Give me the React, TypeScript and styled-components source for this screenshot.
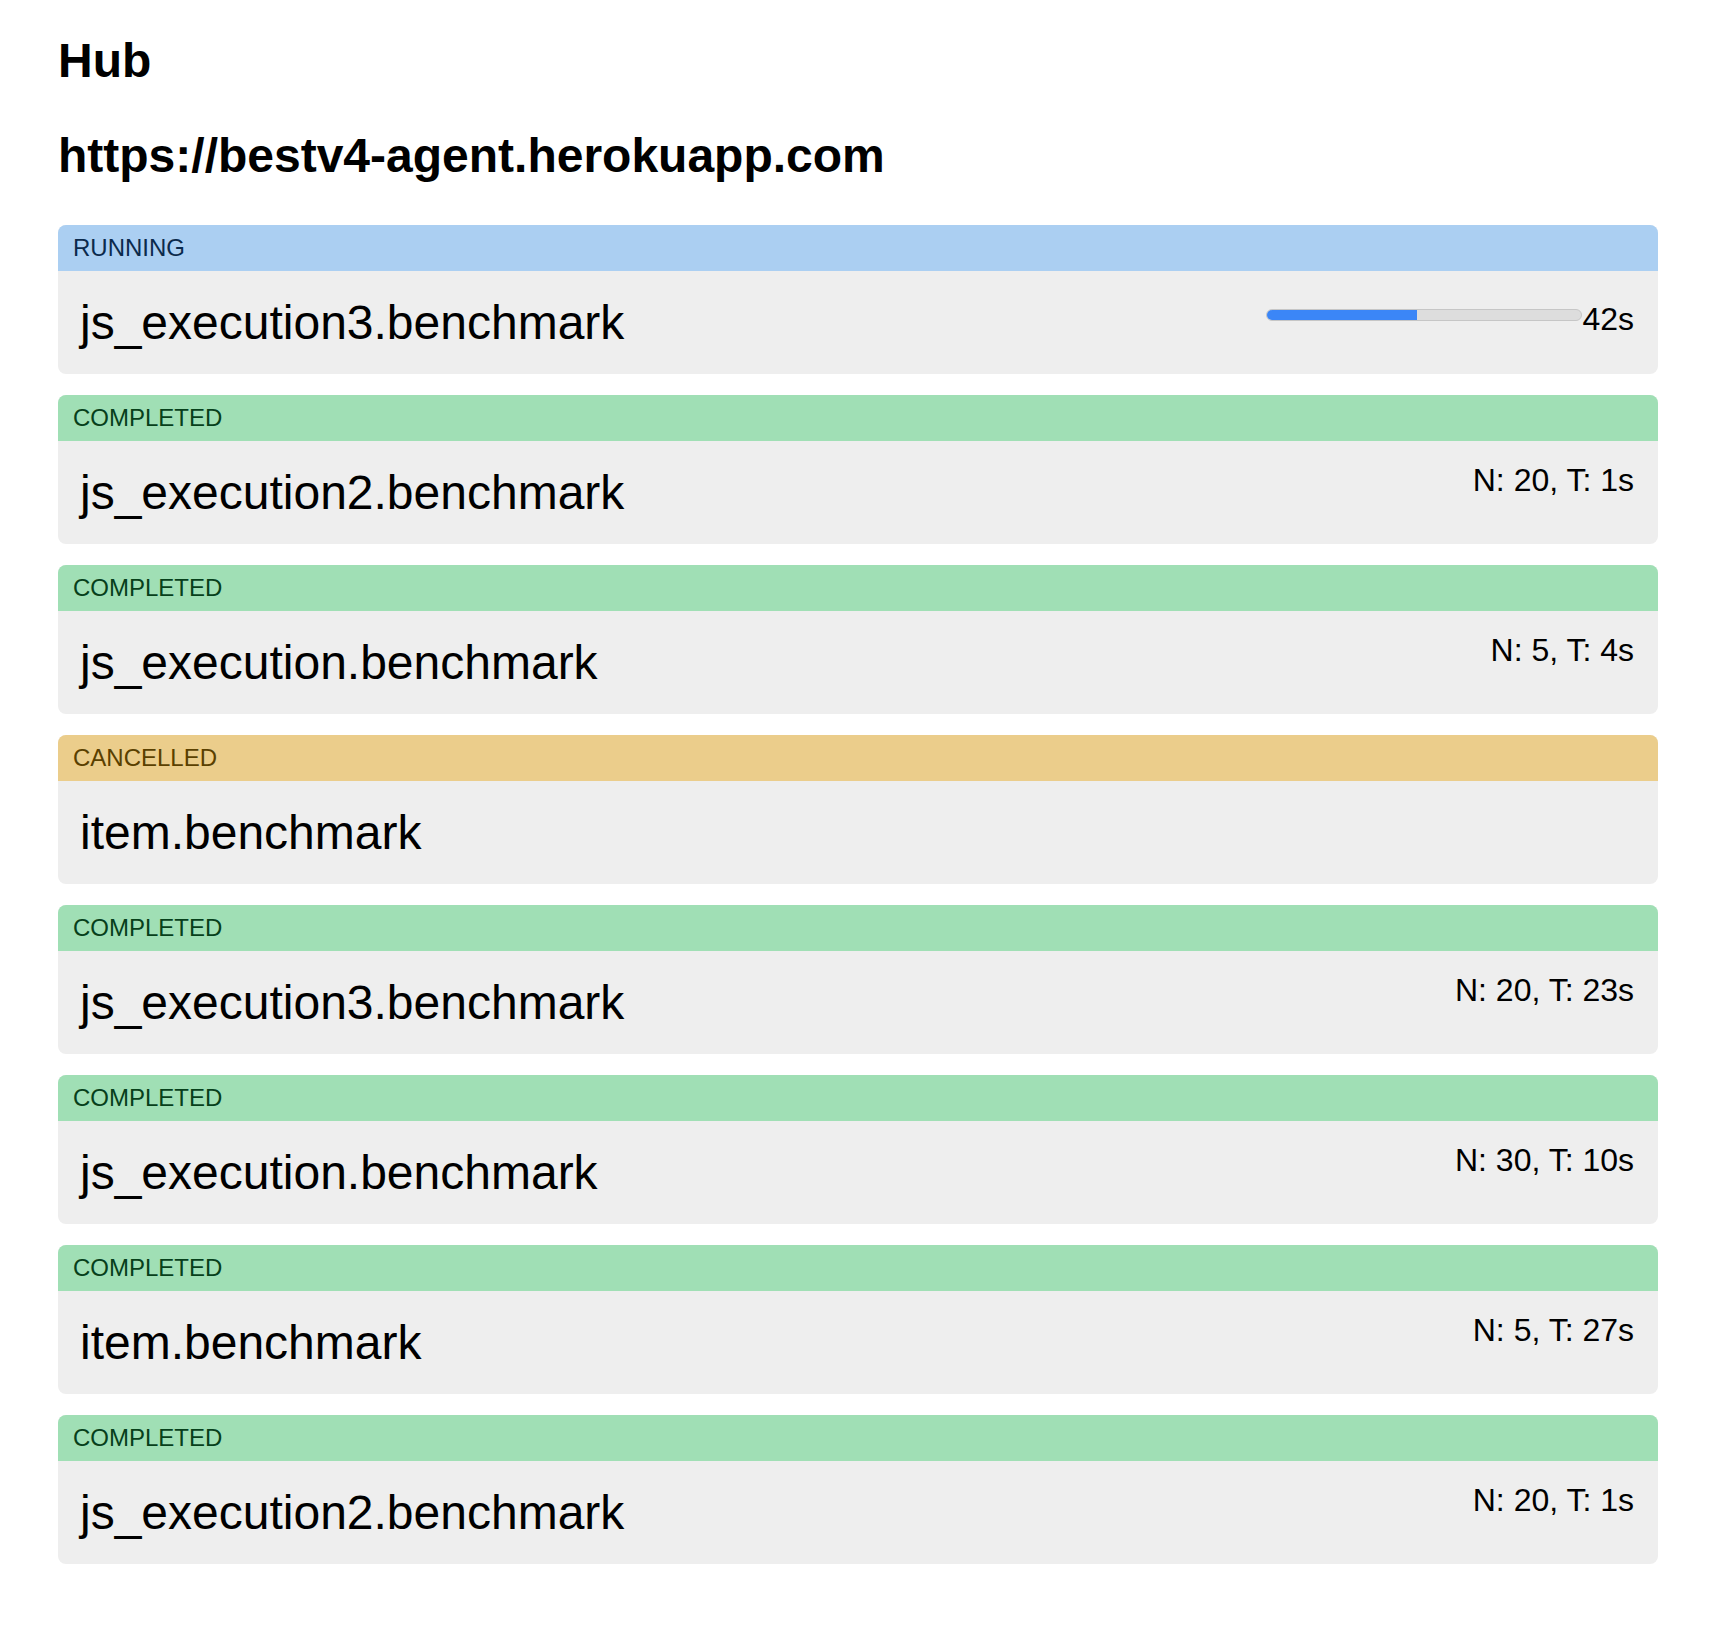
import React from "react";
import styled, { createGlobalStyle } from "styled-components";

const Global = createGlobalStyle`
  html, body { margin: 0; padding: 0; background: #ffffff; }
  body { font-family: "Liberation Sans", Arial, Helvetica, sans-serif; color: #000; }
`;

const Page = styled.div`
  padding: 33px 0 40px 58px;
  width: 1600px;
`;

const Title = styled.h2`
  font-size: 48px;
  font-weight: 700;
  line-height: 55px;
  margin: 0 0 40px 0;
`;

const Url = styled(Title)`
  margin-bottom: 0;
`;

const List = styled.div`
  display: flex;
  flex-direction: column;
  gap: 21px;
  margin-top: 42px;
`;

type Status = "RUNNING" | "COMPLETED" | "CANCELLED";

const palette: Record<Status, { bg: string; fg: string }> = {
  RUNNING: { bg: "#abcff2", fg: "#0b2a4c" },
  COMPLETED: { bg: "#a0dfb5", fg: "#07401b" },
  CANCELLED: { bg: "#ebcd8b", fg: "#5a4000" },
};

const Card = styled.div`
  border-radius: 8px;
  overflow: hidden;
  background: #eeeeee;
`;

const Label = styled.div<{ $status: Status }>`
  height: 46px;
  box-sizing: border-box;
  padding: 9px 15px 0 15px;
  font-size: 24px;
  line-height: 28px;
  background: ${(p) => palette[p.$status].bg};
  color: ${(p) => palette[p.$status].fg};
`;

const Body = styled.div`
  display: flex;
  justify-content: space-between;
  align-items: flex-start;
  padding: 21px 24px 21px 22px;
  height: 103px;
  box-sizing: border-box;
`;

const Name = styled.div`
  font-size: 48px;
  line-height: 61px;
  white-space: nowrap;
`;

const Meta = styled.div<{ $running?: boolean }>`
  display: flex;
  align-items: flex-start;
  font-size: 32px;
  line-height: 37px;
  margin-top: ${(p) => (p.$running ? "9px" : "0")};
  white-space: nowrap;
`;

const Track = styled.div`
  width: 316px;
  height: 12px;
  box-sizing: border-box;
  margin-top: 8px;
  border-radius: 6px;
  background: #dddddd;
  border: 1px solid #c6c6c6;
  overflow: hidden;
  display: flex;
`;

const Fill = styled.div`
  height: 100%;
  background: #3b86f7;
`;

type Job = { status: Status; name: string; meta?: string; progress?: number; elapsed?: string };

const jobs: Job[] = [
  { status: "RUNNING", name: "js_execution3.benchmark", progress: 0.476, elapsed: "42s" },
  { status: "COMPLETED", name: "js_execution2.benchmark", meta: "N: 20, T: 1s" },
  { status: "COMPLETED", name: "js_execution.benchmark", meta: "N: 5, T: 4s" },
  { status: "CANCELLED", name: "item.benchmark" },
  { status: "COMPLETED", name: "js_execution3.benchmark", meta: "N: 20, T: 23s" },
  { status: "COMPLETED", name: "js_execution.benchmark", meta: "N: 30, T: 10s" },
  { status: "COMPLETED", name: "item.benchmark", meta: "N: 5, T: 27s" },
  { status: "COMPLETED", name: "js_execution2.benchmark", meta: "N: 20, T: 1s" },
];

export default function App() {
  return (
    <>
      <Global />
      <Page>
        <Title>Hub</Title>
        <Url>https://bestv4-agent.herokuapp.com</Url>
        <List>
          {jobs.map((j, i) => (
            <Card key={i}>
              <Label $status={j.status}>{j.status}</Label>
              <Body>
                <Name>{j.name}</Name>
                {j.status === "RUNNING" ? (
                  <Meta $running>
                    <Track>
                      <Fill style={{ width: `${(j.progress ?? 0) * 100}%` }} />
                    </Track>
                    <span>{j.elapsed}</span>
                  </Meta>
                ) : j.meta ? (
                  <Meta>{j.meta}</Meta>
                ) : null}
              </Body>
            </Card>
          ))}
        </List>
      </Page>
    </>
  );
}
